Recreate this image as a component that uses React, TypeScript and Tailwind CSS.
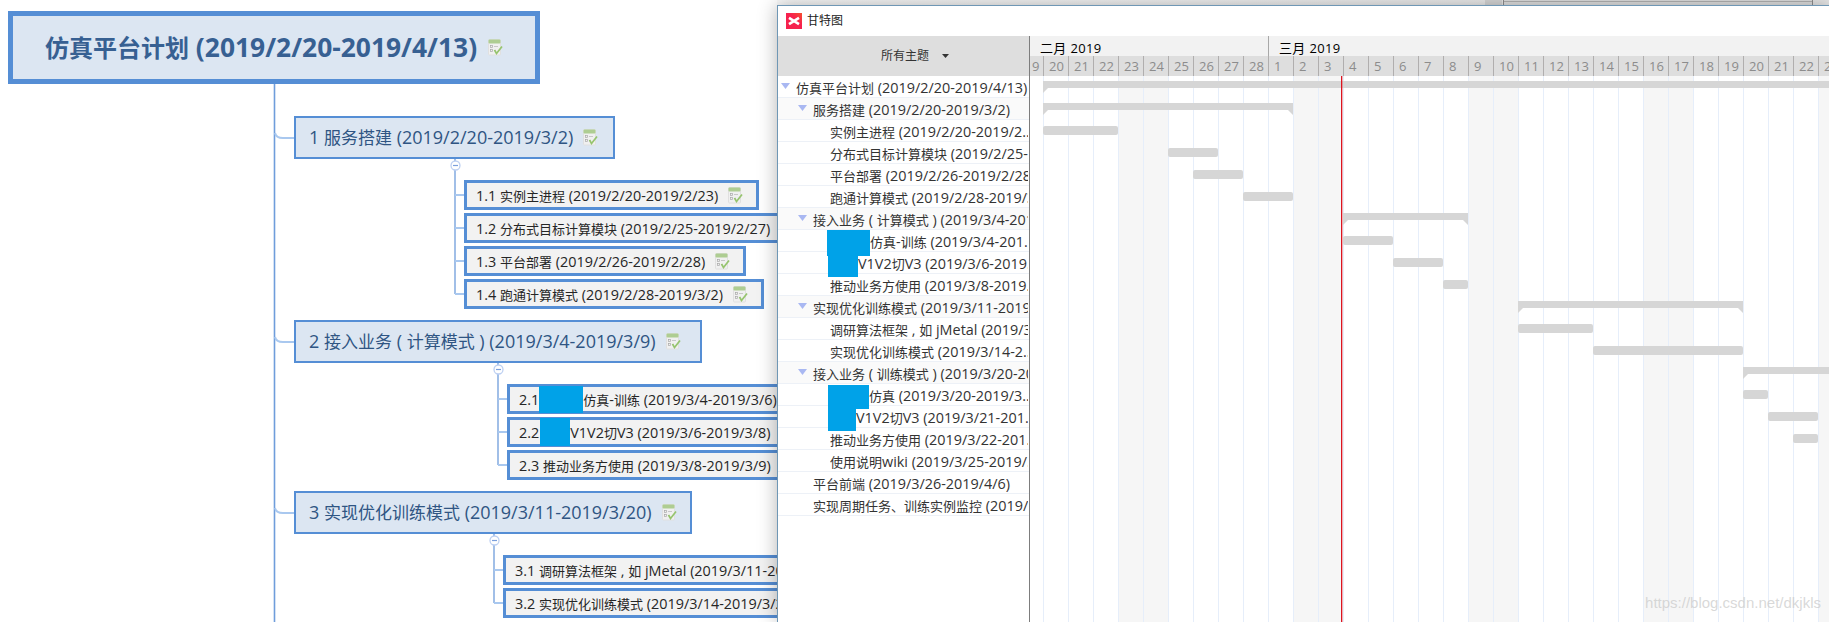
import React from "react";

const FONT = "[font-family:'Open_Sans','Noto_Sans_CJK_SC',sans-serif]";

function Mixed({ text, latin }: { text: string; latin: string }) {
  const parts = text.split(/([\u3000-\u9fff\uff00-\uffef]+)/);
  return (
    <>
      {parts.map((p, i) =>
        i % 2 === 1 ? (
          <span key={i}>{p}</span>
        ) : (
          <span key={i} className={latin}>
            {p}
          </span>
        ),
      )}
    </>
  );
}

function TaskIcon() {
  return (
    <svg width="15" height="17" viewBox="0 0 15 17" className="shrink-0">
      <rect x="0.5" y="0.5" width="12" height="15.5" rx="1" fill="#f0f0f0" stroke="#e0e0e0" />
      <rect x="0.5" y="0.5" width="12" height="4" rx="1" fill="#aecd92" />
      <rect x="2.5" y="6.5" width="2" height="2" fill="none" stroke="#a8a8a8" strokeWidth="0.7" />
      <rect x="2.5" y="10.5" width="2" height="2" fill="none" stroke="#a8a8a8" strokeWidth="0.7" />
      <path d="M6 7.5h4M6 11.5h1.5" stroke="#bcbcbc" strokeWidth="0.8" />
      <path d="M6.5 11l2 3.5L14 7.5" fill="none" stroke="#96c46e" strokeWidth="1.7" />
    </svg>
  );
}

function Connectors() {
  const trunk = "#6f9ddb";
  const branch = "#a9c8ef";
  return (
    <svg width="800" height="622" viewBox="0 0 800 622" className="absolute left-0 top-0">
      <path d="M274.5 84V622" stroke={trunk} strokeWidth="1.6" fill="none" />
      {[138, 342, 513].map((y) => (
        <path key={y} d={`M275 ${y - 5}Q276 ${y} 283 ${y}H294`} stroke={branch} strokeWidth="2" fill="none" />
      ))}
      {[
        { x: 455, from: 159, ys: [195, 228, 261, 294] },
        { x: 498, from: 363, ys: [399, 432, 465] },
        { x: 494, from: 534, ys: [570, 603] },
      ].map((g) => (
        <g key={g.x}>
          <path d={`M${g.x} ${g.from}V${g.ys[g.ys.length - 1]}`} stroke={trunk} strokeWidth="1.3" fill="none" />
          {g.ys.map((y) => (
            <path key={y} d={`M${g.x} ${y}H${g.x + 10}`} stroke={branch} strokeWidth="2" fill="none" />
          ))}
          <circle cx={g.x + 0.5} cy={g.from + 6.5} r="4.5" fill="#fff" stroke="#bdd0f2" strokeWidth="1.3" />
          <path d={`M${g.x - 2} ${g.from + 6.5}H${g.x + 3}`} stroke="#7b9fdc" strokeWidth="1.2" />
        </g>
      ))}
    </svg>
  );
}

function Main({ className, text }: { className: string; text: string }) {
  return (
    <div className={`absolute flex h-[43px] items-center border-[2.5px] border-[#558ed5] bg-[#dce6f2] pl-[13px] text-[17px] text-[#2f5583] ${className}`}>
      <span className="whitespace-pre">
        <Mixed text={text} latin="text-[18px]" />
      </span>
      <span className="ml-[10px]">
        <TaskIcon />
      </span>
    </div>
  );
}

function Sub({ className, num, text, icon, patch }: { className: string; num: string; text: string; icon?: string; patch?: React.ReactNode }) {
  return (
    <div className={`absolute flex h-[30px] items-center whitespace-pre border-[3px] border-[#558ed5] bg-[#f2f2f2] pl-[9px] text-[13px] text-[#262626] ${className}`}>
      <span className="pt-[1px] text-[14.4px]">{num}</span>
      {patch}
      <span className="pt-[1px]">
        <Mixed text={text} latin="text-[14.4px]" />
      </span>
      {icon ? (
        <span className={icon}>
          <TaskIcon />
        </span>
      ) : null}
    </div>
  );
}

function MindMap() {
  return (
    <>
      <Connectors />
      <div className="absolute left-[8px] top-[11px] flex h-[73px] w-[532px] items-center border-[5px] border-[#558ed5] bg-[#dce6f2] pl-[32px] text-[24px] font-bold text-[#376092]">
        <span className="whitespace-pre">
          <Mixed text="仿真平台计划 (2019/2/20-2019/4/13)" latin="text-[26.4px]" />
        </span>
        <span className="ml-[11px]">
          <TaskIcon />
        </span>
      </div>
      <Main className="left-[294px] top-[116px] w-[321px]" text="1 服务搭建 (2019/2/20-2019/3/2)" />
      <Sub className="left-[464px] top-[180px] w-[295px]" num="1.1" text=" 实例主进程 (2019/2/20-2019/2/23)" icon="ml-[10px]" />
      <Sub className="left-[464px] top-[213px] w-[320px]" num="1.2" text=" 分布式目标计算模块 (2019/2/25-2019/2/27)" />
      <Sub className="left-[464px] top-[246px] w-[282px]" num="1.3" text=" 平台部署 (2019/2/26-2019/2/28)" icon="ml-[10px]" />
      <Sub className="left-[464px] top-[279px] w-[300px]" num="1.4" text=" 跑通计算模式 (2019/2/28-2019/3/2)" icon="ml-[10px]" />

      <Main className="left-[294px] top-[320px] w-[408px]" text="2 接入业务 ( 计算模式 ) (2019/3/4-2019/3/9)" />
      <Sub className="left-[507px] top-[384px] w-[320px]" num="2.1" text="仿真-训练 (2019/3/4-2019/3/6)" patch={<span className="h-[27px] w-[44px] shrink-0 bg-[#00a2e8]" />} />
      <Sub className="left-[507px] top-[417px] w-[320px]" num="2.2" text="V1V2切V3 (2019/3/6-2019/3/8)" patch={<span className="ml-[1px] h-[28px] w-[30px] shrink-0 bg-[#00a2e8]" />} />
      <Sub className="left-[507px] top-[450px] w-[320px]" num="2.3" text=" 推动业务方使用 (2019/3/8-2019/3/9)" />

      <Main className="left-[294px] top-[491px] w-[398px]" text="3 实现优化训练模式 (2019/3/11-2019/3/20)" />
      <Sub className="left-[503px] top-[555px] w-[320px]" num="3.1" text=" 调研算法框架 , 如 jMetal (2019/3/11-2019/3/13)" />
      <Sub className="left-[503px] top-[588px] w-[320px]" num="3.2" text=" 实现优化训练模式 (2019/3/14-2019/3/20)" />
    </>
  );
}

type Row = { level: 0 | 1 | 2; text: string; open?: boolean; patch?: string };

const ROWS: Row[] = [
  { level: 0, open: true, text: "仿真平台计划 (2019/2/20-2019/4/13)" },
  { level: 1, open: true, text: "服务搭建 (2019/2/20-2019/3/2)" },
  { level: 2, text: "实例主进程 (2019/2/20-2019/2.." },
  { level: 2, text: "分布式目标计算模块 (2019/2/25-2019/2/27)" },
  { level: 2, text: "平台部署 (2019/2/26-2019/2/28)" },
  { level: 2, text: "跑通计算模式 (2019/2/28-2019/3/2)" },
  { level: 1, open: true, text: "接入业务 ( 计算模式 ) (2019/3/4-2019/3/9)" },
  { level: 2, text: "仿真-训练 (2019/3/4-201..", patch: "mt-0 h-[26px] w-[43px] -ml-[3px]" },
  { level: 2, text: "V1V2切V3 (2019/3/6-2019..", patch: "mt-[4px] h-[21px] w-[30px] -ml-[2px]" },
  { level: 2, text: "推动业务方使用 (2019/3/8-2019.." },
  { level: 1, open: true, text: "实现优化训练模式 (2019/3/11-2019/3/20)" },
  { level: 2, text: "调研算法框架 , 如 jMetal (2019/3/11-2019/3/13)" },
  { level: 2, text: "实现优化训练模式 (2019/3/14-2.." },
  { level: 1, open: true, text: "接入业务 ( 训练模式 ) (2019/3/20-2019/3/25)" },
  { level: 2, text: "仿真 (2019/3/20-2019/3..", patch: "mt-[1px] h-[24px] w-[41px] -ml-[2px]" },
  { level: 2, text: "V1V2切V3 (2019/3/21-201..", patch: "mt-[3px] h-[22px] w-[28px] -ml-[2px]" },
  { level: 2, text: "推动业务方使用 (2019/3/22-201.." },
  { level: 2, text: "使用说明wiki (2019/3/25-2019/.." },
  { level: 1, text: "平台前端 (2019/3/26-2019/4/6)" },
  { level: 1, text: "实现周期任务、训练实例监控 (2019/3/26-2019/4/13)" },
];

function TreeRow({ row }: { row: Row }) {
  const indent = row.level === 0 ? "pl-[3px]" : row.level === 1 ? "pl-[20px]" : "pl-[52px]";
  return (
    <div className={`flex h-[22px] items-start border-b border-[#edf1f7] pr-[1px] text-[13px] leading-[24px] text-[#333] ${row.open && row.level === 1 ? "bg-[#fafafa]" : "bg-white"} ${indent}`}>
      {row.level < 2 ? (
        <span className="w-[15px] shrink-0 pt-[7px]">
          {row.open ? <span className="block h-[6px] w-[9px] bg-[#a9b8f2] [clip-path:polygon(0_0,100%_0,50%_100%)]" /> : null}
        </span>
      ) : null}
      {row.patch ? <span className={`relative z-10 shrink-0 bg-[#00a2e8] ${row.patch}`} /> : null}
      <span className="min-w-0 flex-1 overflow-hidden whitespace-pre">
        <Mixed text={row.text} latin="text-[14.4px]" />
      </span>
    </div>
  );
}

type Day = { label: number; weekend: boolean; narrow?: boolean };
const FEB: Day[] = [
  { label: 9, weekend: false, narrow: true },
  ...[20, 21, 22, 23, 24, 25, 26, 27, 28].map((d) => ({ label: d, weekend: d === 23 || d === 24 })),
];
const MAR: Day[] = Array.from({ length: 24 }, (_, i) => i + 1).map((d) => ({
  label: d,
  weekend: [2, 3, 9, 10, 16, 17, 23].includes(d),
}));
const DAYS = [...FEB, ...MAR];

type Bar = { row: number; from: number; to: number; summary?: boolean; open?: boolean };
const BARS: Bar[] = [
  { row: 0, from: 1043, to: 1829, summary: true, open: true },
  { row: 1, from: 1043, to: 1293, summary: true },
  { row: 2, from: 1043, to: 1118 },
  { row: 3, from: 1168, to: 1218 },
  { row: 4, from: 1193, to: 1243 },
  { row: 5, from: 1243, to: 1293 },
  { row: 6, from: 1343, to: 1468, summary: true },
  { row: 7, from: 1343, to: 1393 },
  { row: 8, from: 1393, to: 1443 },
  { row: 9, from: 1443, to: 1468 },
  { row: 10, from: 1518, to: 1743, summary: true },
  { row: 11, from: 1518, to: 1593 },
  { row: 12, from: 1593, to: 1743 },
  { row: 13, from: 1743, to: 1829, summary: true, open: true },
  { row: 14, from: 1743, to: 1768 },
  { row: 15, from: 1768, to: 1818 },
  { row: 16, from: 1793, to: 1818 },
];

function GanttBar({ bar }: { bar: Bar }) {
  const left = bar.from - 1030;
  const width = bar.to - bar.from;
  if (bar.summary) {
    return (
      <div className="absolute h-[7px] bg-[#d6d6d6]" style={{ left, width, top: bar.row * 22 + 5 }}>
        <div className="absolute left-0 top-[7px] h-[5px] w-[5px] bg-[#d6d6d6] [clip-path:polygon(0_0,100%_0,0_100%)]" />
        {bar.open ? null : (
          <div className="absolute right-0 top-[7px] h-[5px] w-[5px] bg-[#d6d6d6] [clip-path:polygon(0_0,100%_0,100%_100%)]" />
        )}
      </div>
    );
  }
  return <div className="absolute h-[9px] rounded-[2px] bg-[#d6d6d6]" style={{ left, width, top: bar.row * 22 + 6 }} />;
}

function Gantt() {
  return (
    <div className="absolute bottom-0 left-[777px] right-0 top-[5px] flex flex-col border-l border-t border-[#6f97b5] bg-white shadow-[0_0_18px_rgba(0,0,0,0.3)]">
      <div className="flex h-[30px] shrink-0 items-center pl-[8px] text-[12px] text-[#222]">
        <svg width="16" height="16" viewBox="0 0 16 16" className="mr-[5px]">
          <defs>
            <linearGradient id="logo" x1="0" y1="1" x2="1" y2="0">
              <stop offset="0.6" stopColor="#f6214e" />
              <stop offset="1" stopColor="#f6502e" />
            </linearGradient>
          </defs>
          <rect width="16" height="16" fill="url(#logo)" />
          <path d="M3 4.8L13 11.2M13 4.8L3 11.2" stroke="#fff" strokeWidth="2.6" fill="none" />
        </svg>
        甘特图
      </div>
      <div className="flex min-h-0 flex-1">
        <div className="flex w-[252px] shrink-0 flex-col border-r-[1.5px] border-[#7d7d7d]">
          <div className="flex h-[40px] shrink-0 items-center bg-[#dedede] pl-[103px] text-[12px] text-[#333]">
            所有主题
            <span className="ml-[13px] h-[4px] w-[7px] bg-[#333] [clip-path:polygon(0_0,100%_0,50%_100%)]" />
          </div>
          {ROWS.map((r, i) => (
            <TreeRow key={i} row={r} />
          ))}
        </div>
        <div className="relative min-w-0 flex-1 overflow-hidden">
          <div className="flex h-[20px] bg-[#f2f2f2] text-[13px] leading-[24px] text-black">
            <div className="w-[239px] shrink-0 border-r border-[#a8a8a8] pl-[10px] tracking-[0.35px]">二月 2019</div>
            <div className="pl-[10px] tracking-[0.35px]">三月 2019</div>
          </div>
          <div className="flex h-[20px] bg-[#dedede] text-[13px] leading-[21px] text-[#8c8c8c]">
            {DAYS.map((d, i) => (
              <div
                key={i}
                className={`shrink-0 border-r border-[#b0aeae] ${d.narrow ? "w-[14px] pl-[2px]" : "w-[25px] pl-[5px]"}`}
              >
                {d.label}
              </div>
            ))}
          </div>
          <div className="relative h-[546px]">
            <div className="flex h-full">
              {DAYS.map((d, i) => (
                <div
                  key={i}
                  className={`shrink-0 border-r border-[#e6eefa] ${d.narrow ? "w-[14px]" : "w-[25px]"} ${d.weekend ? "bg-[#f6f6f6]" : "bg-white"}`}
                />
              ))}
            </div>
            {BARS.map((b) => (
              <GanttBar key={b.row} bar={b} />
            ))}
            <div className="absolute bottom-0 left-[311px] top-0 w-px bg-[#dc1420] shadow-[1px_0_0_rgba(224,20,30,0.3)]" />
            <div className="absolute bottom-[8px] right-[8px] text-[15px] [font-family:'Liberation_Sans',sans-serif] text-[#c8c8c8]/70">
              https://blog.csdn.net/dkjkls
            </div>
          </div>
        </div>
      </div>
    </div>
  );
}

function TopStrip() {
  return (
    <div className="absolute left-[777px] right-0 top-0 flex h-[5px] bg-gradient-to-r from-[#fafafa] to-[#e6e6e6]">
      <div className="ml-[708px] h-full w-[17px] bg-[#d8d8d8]" />
      <div className="ml-[1px] h-full w-[310px] border-x border-[#8f8f8f] bg-[#e2e2e2]">
        <div className="mt-[1px] h-[1px] bg-[#b5b5b5]" />
      </div>
    </div>
  );
}

export default function App() {
  return (
    <div className={`relative h-[622px] w-[1829px] overflow-hidden bg-white ${FONT}`}>
      <MindMap />
      <TopStrip />
      <Gantt />
    </div>
  );
}
